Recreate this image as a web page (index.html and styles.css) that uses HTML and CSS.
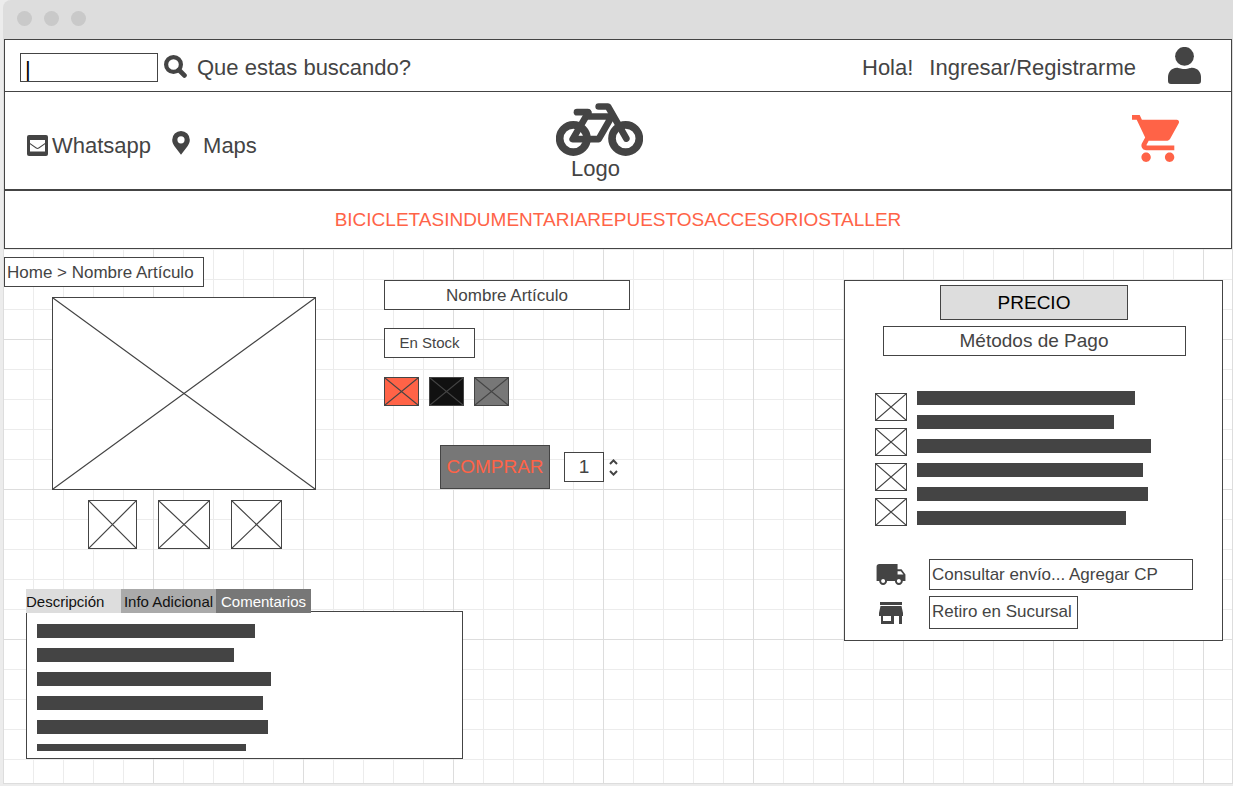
FILE: index.html
```html
<!DOCTYPE html>
<html lang="es">
<head>
<meta charset="utf-8">
<meta name="viewport" content="width=device-width, initial-scale=1">
<title>Nombre Artículo</title>
<link rel="stylesheet" href="styles.css">
</head>
<body>
<svg class="defs" width="0" height="0" aria-hidden="true">
  <symbol id="cross" viewBox="0 0 100 100" preserveAspectRatio="none">
    <path d="M0 0L100 100M100 0L0 100" fill="none" stroke="#444" stroke-width="1.2" vector-effect="non-scaling-stroke"/>
  </symbol>
</svg>
<div class="window">
  <div class="titlebar"><span class="dot"></span><span class="dot"></span><span class="dot"></span></div>
  <div class="screen">
    <header class="header">
      <div class="topbar">
        <form class="search" role="search">
          <input class="search-input" id="q" type="text" value="|">
          <svg class="search-icon" viewBox="0 0 23 23" aria-hidden="true"><circle cx="9.5" cy="9.5" r="7.4" fill="none" stroke="#444" stroke-width="4.2"/><path d="M15 15l5.4 5.4" stroke="#444" stroke-width="4.8" stroke-linecap="round"/></svg>
          <label class="search-label" for="q">Que estas buscando?</label>
        </form>
        <div class="account">
          <span class="greeting">Hola!</span>
          <a class="login" href="#">Ingresar/Registrarme</a>
          <svg class="user-icon" viewBox="0 0 33 37" aria-hidden="true"><circle cx="16.5" cy="9.3" r="9.4"/><path d="M9 20.8C11 20.8 12 22 16.5 22S22 20.8 24 20.8C30 20.8 33 26 33 30V34Q33 37 30 37H3Q0 37 0 34V30C0 26 3 20.8 9 20.8Z"/></svg>
        </div>
      </div>
      <div class="brandbar">
        <div class="contact">
          <a class="contact-link" href="#">
            <svg class="mail-icon" viewBox="0 0 21 21" aria-hidden="true"><rect width="21" height="21" rx="2"/><path d="M3 5H18V8L11.5 12.6Q10.5 13.3 9.5 12.6L3 8Z" fill="#fff"/><path d="M3 9.3L9 13.6Q10.5 14.5 12 13.6L18 9.3V16.5H3Z" fill="#fff"/></svg>
            <span>Whatsapp</span>
          </a>
          <a class="contact-link maps" href="#">
            <svg class="pin-icon" viewBox="0 0 18 24" aria-hidden="true"><path fill-rule="evenodd" d="M9 0A8.8 8.8 0 0 0 .2 8.8C.2 11.6 1.2 13.2 2.5 15.2L9 23.7L15.5 15.2C16.8 13.2 17.8 11.6 17.8 8.8A8.8 8.8 0 0 0 9 0ZM9 5.2a3.6 3.6 0 1 1 0 7.2a3.6 3.6 0 1 1 0-7.2Z"/></svg>
            <span>Maps</span>
          </a>
        </div>
        <a class="logo" href="#">
          <svg class="bike-icon" viewBox="108 40 261 158" aria-hidden="true"><g fill="none" stroke="#444" stroke-width="20" stroke-linecap="round" stroke-linejoin="round"><circle cx="160" cy="146" r="41" stroke-width="23"/><circle cx="317" cy="146" r="41" stroke-width="23"/><path d="M171 67H203"/><path d="M205 68L158 148H236L275 80H200"/><path d="M236 50H264L319 146"/></g></svg>
          <span class="logo-text">Logo</span>
        </a>
        <a class="cart" href="#" aria-label="Carrito">
          <svg class="cart-icon" viewBox="1 2 20 20" aria-hidden="true"><path d="M7 18c-1.1 0-1.99.9-1.99 2S5.9 22 7 22s2-.9 2-2-.9-2-2-2zM1 2v2h2l3.6 7.59-1.35 2.45c-.16.28-.25.61-.25.96 0 1.1.9 2 2 2h12v-2H7.42c-.14 0-.25-.11-.25-.25l.03-.12.9-1.63h7.45c.75 0 1.41-.41 1.75-1.03l3.58-6.49A1.003 1.003 0 0 0 20 4H5.21l-.94-2H1zm16 16c-1.1 0-1.99.9-1.99 2s.89 2 1.99 2 2-.9 2-2-.9-2-2-2z"/></svg>
        </a>
      </div>
      <nav class="nav"><a href="#">BICICLETAS</a><a href="#">INDUMENTARIA</a><a href="#">REPUESTOS</a><a href="#">ACCESORIOS</a><a href="#">TALLER</a></nav>
    </header>

    <main class="product">
      <section class="gallery">
        <div class="box breadcrumb">Home &gt; Nombre Artículo</div>
        <div class="box photo"><svg class="cross"><use href="#cross"/></svg></div>
        <div class="thumbs">
          <div class="box"><svg class="cross"><use href="#cross"/></svg></div>
          <div class="box"><svg class="cross"><use href="#cross"/></svg></div>
          <div class="box"><svg class="cross"><use href="#cross"/></svg></div>
        </div>
      </section>

      <section class="details">
        <h1 class="box name">Nombre Artículo</h1>
        <div class="box stock">En Stock</div>
        <div class="swatches">
          <button class="box swatch red" aria-label="Rojo"><svg class="cross"><use href="#cross"/></svg></button>
          <button class="box swatch black" aria-label="Negro"><svg class="cross"><use href="#cross"/></svg></button>
          <button class="box swatch gray" aria-label="Gris"><svg class="cross"><use href="#cross"/></svg></button>
        </div>
        <div class="purchase">
          <button class="box buy">COMPRAR</button>
          <input class="box quantity" type="text" inputmode="numeric" value="1" aria-label="Cantidad">
          <div class="stepper">
            <button aria-label="Más"><svg viewBox="0 0 9 6"><path d="M1 5l3.5-3.6L8 5"/></svg></button>
            <button aria-label="Menos"><svg viewBox="0 0 9 6"><path d="M1 1l3.5 3.6L8 1"/></svg></button>
          </div>
        </div>
      </section>

      <aside class="box offer">
        <div class="box price">PRECIO</div>
        <h2 class="box methods">Métodos de Pago</h2>
        <div class="payments">
          <div class="cards">
            <div class="box"><svg class="cross"><use href="#cross"/></svg></div>
            <div class="box"><svg class="cross"><use href="#cross"/></svg></div>
            <div class="box"><svg class="cross"><use href="#cross"/></svg></div>
            <div class="box"><svg class="cross"><use href="#cross"/></svg></div>
          </div>
          <div class="lines"><i style="width:218px"></i><i style="width:197px"></i><i style="width:234px"></i><i style="width:226px"></i><i style="width:231px"></i><i style="width:209px"></i></div>
        </div>
        <div class="delivery">
          <svg class="truck-icon" viewBox="1 4 22 16" aria-hidden="true"><path d="M20 8h-3V4H3c-1.1 0-2 .9-2 2v11h2c0 1.66 1.34 3 3 3s3-1.34 3-3h6c0 1.66 1.34 3 3 3s3-1.34 3-3h2v-5l-3-4zM6 18.5c-.83 0-1.5-.67-1.5-1.5s.67-1.5 1.5-1.5 1.5.67 1.5 1.5-.67 1.5-1.5 1.5zm13.5-9l1.96 2.5H17V9.5h2.5zm-1.5 9c-.83 0-1.5-.67-1.5-1.5s.67-1.5 1.5-1.5 1.5.67 1.5 1.5-.67 1.5-1.5 1.5z"/></svg>
          <input class="box shipping" type="text" value="Consultar envío... Agregar CP" aria-label="Código postal">
          <svg class="store-icon" viewBox="0 0 24 22" aria-hidden="true"><path fill-rule="evenodd" d="M1 0H23V3H1ZM1.500 4H22.500L24 11V14H23V22H20V14H15V22H2V14H0V11ZM4 14V19H12V14Z"/></svg>
          <div class="box pickup">Retiro en Sucursal</div>
        </div>
      </aside>

      <section class="info">
        <div class="tabs" role="tablist">
          <button class="tab first" role="tab" aria-selected="true">Descripción</button>
          <button class="tab second" role="tab">Info Adicional</button>
          <button class="tab third" role="tab">Comentarios</button>
        </div>
        <div class="box panel">
          <div class="lines clipped"><i style="width:218px"></i><i style="width:197px"></i><i style="width:234px"></i><i style="width:226px"></i><i style="width:231px"></i><i style="width:209px"></i></div>
        </div>
      </section>
    </main>
  </div>
</div>
</body>
</html>
```
FILE: styles.css
```css
* { box-sizing: border-box; }
body {
  margin: 0;
  background: #ececec;
  color: #444;
  font-family: "Liberation Sans", Arial, sans-serif;
  font-size: 17px;
}
a { color: inherit; text-decoration: none; }
button, input { font: inherit; color: inherit; margin: 0; padding: 0; border-radius: 0; }
button { cursor: pointer; }
h1, h2 { margin: 0; font-weight: normal; }
svg { display: block; fill: #444; flex: none; }
.defs { position: absolute; }

.window { display: flex; flex-direction: column; min-height: 100vh; padding: 0 0 2px 3px; }
.titlebar { display: flex; gap: 12px; height: 39px; padding: 11px 0 0 14px; background: #ddd; border-top-left-radius: 8px; }
.dot { width: 15px; height: 15px; border-radius: 50%; background: #c9c9c9; }
.screen {
  flex: 1;
  border: solid #ddd;
  border-width: 0 1px 1px 0;
  background-color: #fff;
  background-image:
    linear-gradient(#ddd 1px, transparent 1px),
    linear-gradient(90deg, #ddd 1px, transparent 1px),
    linear-gradient(#ececec 1px, transparent 1px),
    linear-gradient(90deg, #ececec 1px, transparent 1px);
  background-size: 150px 150px, 150px 150px, 30px 30px, 30px 30px;
}

.box { background: #fff; border: 1px solid #444; }
.cross { width: 100%; height: 100%; }

.header { margin-left: 1px; font-size: 22px; line-height: 26px; }
.topbar, .brandbar, .nav { background: #fff; border: 1px solid #444; }
.topbar { display: flex; justify-content: space-between; align-items: center; min-height: 53px; padding: 3px 30px 0 15px; }
.search { display: flex; align-items: center; }
.search-input { width: 138px; height: 29px; padding: 6px 0 0 4px; border: 1px solid #444; background: #fff; color: #000; outline: 0; }
.search-icon { width: 23px; height: 23px; margin: 0 10px 2px 6px; }
.search-label, .greeting, .login { padding-top: 2px; }
.account { display: flex; align-items: center; }
.login { margin: 0 32px 0 16px; }
.user-icon { width: 33px; height: 37px; margin-bottom: 3px; }

.brandbar { display: grid; grid-template-columns: 1fr auto 1fr; align-items: center; min-height: 98px; padding: 0 52px 0 15px; border-top: 0; }
.contact { display: flex; align-items: center; padding: 10px 0 0 7px; }
.contact-link { display: flex; align-items: center; }
.mail-icon { width: 21px; height: 21px; margin-right: 4px; }
.maps { margin-left: 21px; }
.pin-icon { width: 18px; height: 24px; margin: 0 13px 6px 0; }
.logo { display: flex; flex-direction: column; align-items: center; padding-top: 4px; }
.logo-text { padding-right: 8px; }
.bike-icon { width: 87px; height: 53px; }
.cart { justify-self: end; padding-bottom: 4px; }
.cart-icon { width: 47px; height: 47px; fill: #ff6347; }
.nav { display: flex; justify-content: center; align-items: center; min-height: 59px; color: #ff6347; font-size: 19px; }

.product {
  display: grid;
  grid-template-columns: 380px 1fr 379px;
  row-gap: 40px;
  padding: 8px 9px 24px 1px;
}
.breadcrumb { width: 200px; padding: 5px 2px 3px; line-height: 20px; }
.photo { width: 264px; height: 193px; margin: 10px 0 10px 48px; }
.thumbs { display: grid; grid-template-columns: 49px 52px 51px; grid-auto-rows: 49px; gap: 21px; padding-left: 84px; }

.details { display: flex; flex-direction: column; align-items: flex-start; padding-top: 23px; }
.name { width: 246px; padding: 5px 4px 3px; font-size: 17px; line-height: 20px; text-align: center; }
.stock { width: 91px; margin: 18px 0 19px; padding: 4px; font-size: 15px; line-height: 20px; text-align: center; }
.swatches { display: flex; gap: 10px; }
.swatch { width: 35px; height: 29px; }
.red { background: #ff6347; }
.black { background: #111; }
.gray { background: #777; }
.purchase { display: flex; align-items: center; margin: 39px 0 0 56px; font-size: 19px; }
.buy { width: 110px; height: 44px; background: #777; color: #ff6347; }
.quantity { width: 40px; height: 30px; margin: 0 5px 0 14px; text-align: center; }
.stepper { display: flex; flex-direction: column; gap: 5px; }
.stepper button { border: 0; background: none; }
.stepper svg { width: 9px; height: 6px; fill: none; stroke: #444; stroke-width: 2; }

.offer { grid-column: 3; grid-row: 1 / 3; align-self: start; margin-top: 23px; padding: 4px 29px 11px 30px; }
.price { width: 188px; margin: 0 auto 6px; padding: 4px; background: #ddd; color: #000; font-size: 19px; line-height: 25px; text-align: center; }
.methods { width: 303px; margin: 0 auto; padding: 4px; font-size: 19px; line-height: 20px; text-align: center; }
.payments { display: flex; gap: 10px; margin: 35px 0 33px; }
.cards { display: grid; grid-template-columns: 32px; grid-auto-rows: 28px; gap: 7px; padding-top: 2px; }
.lines { display: flex; flex-direction: column; gap: 10px; }
.lines i { height: 14px; flex: none; background: #444; }
.delivery { display: grid; grid-template-columns: 32px auto; column-gap: 22px; row-gap: 6px; align-items: center; justify-items: start; line-height: 20px; }
.truck-icon { width: 30px; height: 21px; justify-self: center; }
.store-icon { width: 24px; height: 22px; justify-self: center; }
.shipping { width: 264px; height: 31px; padding: 0 2px; }
.pickup { width: 149px; padding: 5px 2px 6px; }

.info { grid-column: 1 / 3; grid-row: 2; padding-left: 22px; }
.tabs { position: relative; display: flex; }
.tab { width: 95px; height: 24px; border: 0; color: #111; font-size: 15px; white-space: nowrap; }
.first { background: #ddd; text-align: left; }
.second { background: #aaa; }
.third { background: #777; color: #fff; }
.panel { width: 437px; height: 148px; margin-top: -2px; padding: 12px 10px 7px; }
.clipped { height: 127px; overflow: hidden; }
```
